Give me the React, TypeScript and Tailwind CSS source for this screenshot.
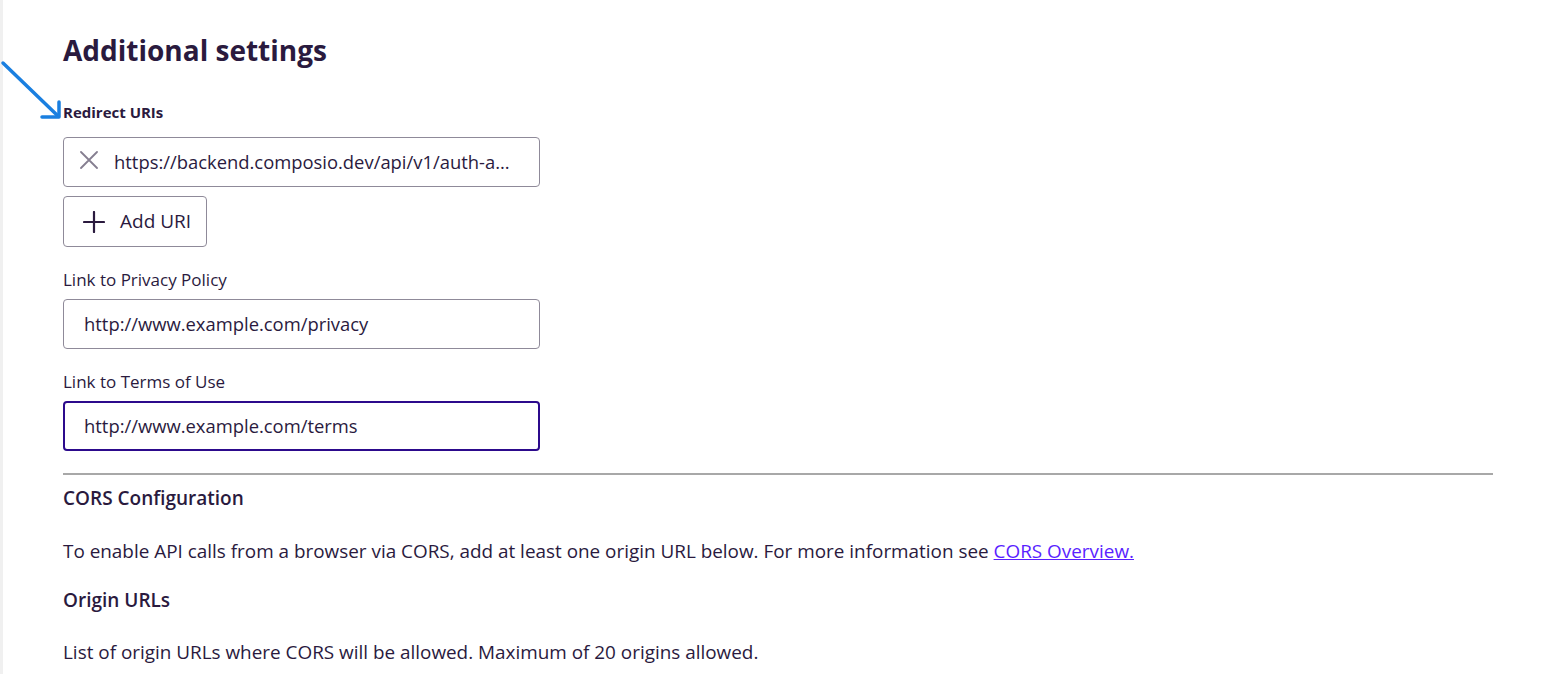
function Field({ label, value, focused }: { label: string; value: string; focused?: boolean }) {
  return (
    <div className="flex flex-col">
      <label className="text-[17px] leading-[20px] font-medium text-[#2a1a3e]">{label}</label>
      <div
        className={`mt-[9px] h-[50px] w-[477px] rounded-[4px] flex items-center text-[18.4px] text-[#2a1a3e] ${
          focused ? "border-2 border-[#2c0a8c] px-[19px]" : "border border-[#8f8a99] px-[20px]"
        }`}
      >
        {value}
      </div>
    </div>
  )
}

export default function App() {
  return (
    <main className="min-h-screen bg-white font-['Open_Sans',sans-serif] text-[#2a1a3e] relative">
      <div className="absolute left-0 top-0 bottom-0 w-[3px] bg-[#f0f0f0]" />
      {/* annotation arrow */}
      <svg className="absolute left-0 top-[60px]" width="70" height="64" viewBox="0 0 70 64">
        <path d="M3 3 L58 56" stroke="#1a7fe0" strokeWidth="3.5" strokeLinecap="round" fill="none" />
        <path d="M42 57 L59 57 L59 42" stroke="#1a7fe0" strokeWidth="3.5" strokeLinecap="round" strokeLinejoin="round" fill="none" />
      </svg>
      <div className="pl-[63px] pr-[56px] pt-[32px]">
        <h1 className="text-[28px] leading-[36px] font-bold">Additional settings</h1>
        <div className="mt-[35px] text-[15px] leading-[18px] font-bold">Redirect URIs</div>
        <div className="mt-[16px] h-[50px] w-[477px] rounded-[4px] border border-[#8f8a99] flex items-center pl-[16px] pr-[12px] gap-[16px]">
          <svg width="18" height="18" viewBox="0 0 18 18" className="shrink-0 -mt-[4px]">
            <path d="M1 1 L17 17 M17 1 L1 17" stroke="#857e90" strokeWidth="1.8" strokeLinecap="round" />
          </svg>
          <span className="text-[18.4px] truncate">https://backend.composio.dev/api/v1/auth-a...</span>
        </div>
        <button className="mt-[9px] h-[51px] pl-[19px] pr-[15px] rounded-[4px] border border-[#8f8a99] flex items-center gap-[15px] text-[19px]">
          <svg width="22" height="22" viewBox="0 0 22 22" className="shrink-0">
            <path d="M11 1 V21 M1 11 H21" stroke="#2a1a3e" strokeWidth="2.2" strokeLinecap="round" />
          </svg>
          <span>Add URI</span>
        </button>
        <div className="mt-[23px] flex flex-col gap-[23px]">
          <Field label="Link to Privacy Policy" value="http://www.example.com/privacy" />
          <Field label="Link to Terms of Use" value="http://www.example.com/terms" focused />
        </div>
        <div className="mt-[22px] h-[2px] bg-[#a8a8a8] w-[1430px]" />
        <h2 className="mt-[11px] text-[19px] leading-[24px] font-semibold">CORS Configuration</h2>
        <p className="mt-[29px] text-[18.9px] leading-[24px]">
          To enable API calls from a browser via CORS, add at least one origin URL below. For more information see{" "}
          <a href="#" className="text-[#5a1fff] underline">CORS Overview.</a>
        </p>
        <h3 className="mt-[25px] text-[19px] leading-[24px] font-semibold">Origin URLs</h3>
        <p className="mt-[28px] text-[18.9px] leading-[24px]">
          List of origin URLs where CORS will be allowed. Maximum of 20 origins allowed.
        </p>
      </div>
    </main>
  )
}
